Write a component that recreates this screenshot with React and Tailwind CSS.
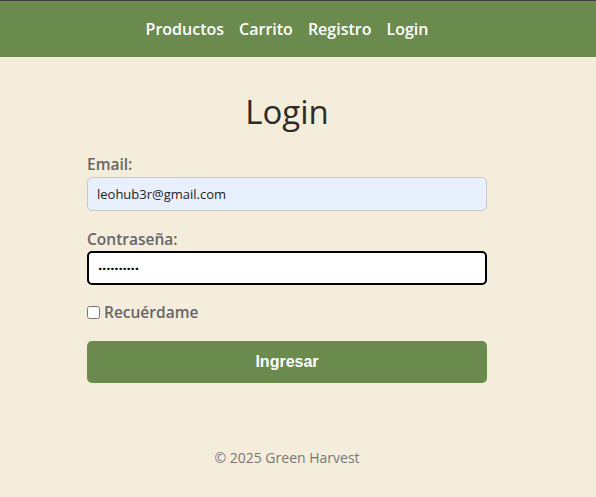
import React from 'react';

const NavLink = ({ children }) => (
  <a href="#" className="text-white font-semibold text-[16px] no-underline">
    {children}
  </a>
);

export default function App() {
  return (
    <div className="min-h-[497px] bg-[#f5eddc] font-['Open_Sans',sans-serif]">
      {/* Header */}
      <header className="h-[57px] bg-[#6b8a4e] border-t border-[#3f3f3f]">
        <nav className="w-[574px] h-full flex items-center justify-center gap-[15px]">
          <NavLink>Productos</NavLink>
          <NavLink>Carrito</NavLink>
          <NavLink>Registro</NavLink>
          <NavLink>Login</NavLink>
        </nav>
      </header>

      <main className="w-[574px] flex flex-col items-center">
        <h1 className="mt-[36px] text-[33px] leading-[38px] font-normal text-[#2b2b2b]">Login</h1>

        <form className="w-[400px] mt-[23px] flex flex-col" onSubmit={(e) => e.preventDefault()}>
          <label className="text-[15.5px] leading-[20px] font-semibold text-[#666]">Email:</label>
          <input
            type="email"
            readOnly
            value="leohub3r@gmail.com"
            className="mt-[3px] h-[34px] px-[9px] rounded-[5px] border border-[#c8c8c8] bg-[#e8f0fe] text-[13px] text-[#222] outline-none"
          />

          <label className="mt-[18px] text-[15.5px] leading-[20px] font-semibold text-[#666]">Contraseña:</label>
          <input
            type="text"
            readOnly
            value="··········"
            className="mt-[2px] h-[34px] px-[9px] rounded-[5px] border-2 border-black bg-white text-[15px] font-bold tracking-[-0.2px] text-black outline-none"
          />

          <label className="mt-[17px] flex items-center gap-[4px] text-[15.5px] leading-[20px] font-semibold text-[#666]">
            <input type="checkbox" className="w-[13px] h-[13px] m-0" />
            Recuérdame
          </label>

          <button
            type="submit"
            className="mt-[19px] h-[42px] rounded-[5px] bg-[#6b8a4e] text-white font-bold text-[16px] font-['Liberation_Sans',Arial,sans-serif]"
          >
            Ingresar
          </button>
        </form>

        <footer className="mt-[65px] text-[14px] leading-[20px] text-[#777]">© 2025 Green Harvest</footer>
      </main>
    </div>
  );
}
